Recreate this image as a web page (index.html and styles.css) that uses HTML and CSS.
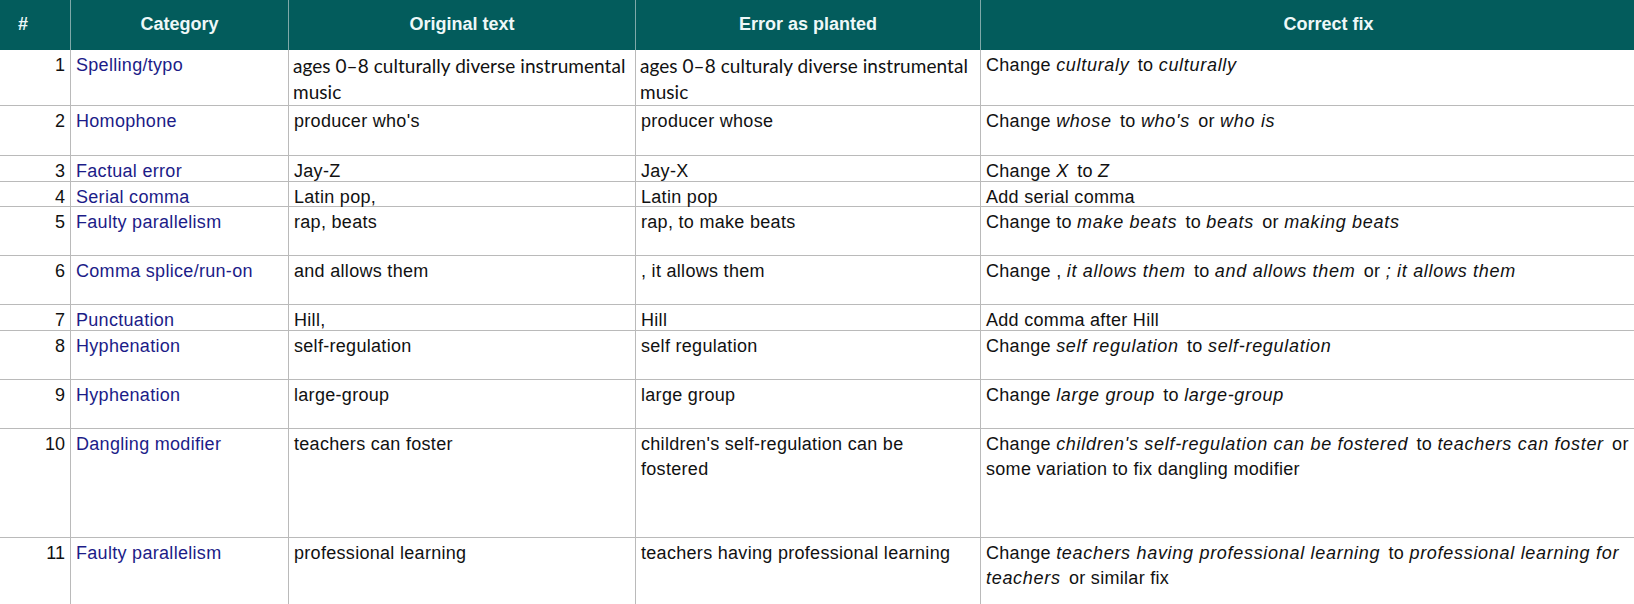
FILE: index.html
```html
<!DOCTYPE html>
<html lang="en">
<head>
<meta charset="utf-8">
<title>Planted errors</title>
<link rel="stylesheet" href="styles.css">
</head>
<body>
<div class="sheet">
  <div class="row head">
    <div class="cell hash">#</div>
    <div class="cell">Category</div>
    <div class="cell">Original text</div>
    <div class="cell">Error as planted</div>
    <div class="cell fixhead">Correct fix</div>
  </div>
  <div class="row h56">
    <div class="cell num">1</div>
    <div class="cell cat">Spelling/typo</div>
    <div class="cell calibri">ages 0–8 culturally diverse instrumental music</div>
    <div class="cell calibri">ages 0–8 culturaly diverse instrumental music</div>
    <div class="cell">Change <i>culturaly</i> to <i>culturally</i></div>
  </div>
  <div class="row h50">
    <div class="cell num">2</div>
    <div class="cell cat">Homophone</div>
    <div class="cell">producer who's</div>
    <div class="cell">producer whose</div>
    <div class="cell">Change <i>whose</i> to <i>who's</i> or <i>who is</i></div>
  </div>
  <div class="row h26">
    <div class="cell num">3</div>
    <div class="cell cat">Factual error</div>
    <div class="cell">Jay-Z</div>
    <div class="cell">Jay-X</div>
    <div class="cell">Change <i>X</i> to <i>Z</i></div>
  </div>
  <div class="row h25">
    <div class="cell num">4</div>
    <div class="cell cat">Serial comma</div>
    <div class="cell">Latin pop,</div>
    <div class="cell">Latin pop</div>
    <div class="cell">Add serial comma</div>
  </div>
  <div class="row h49">
    <div class="cell num">5</div>
    <div class="cell cat">Faulty parallelism</div>
    <div class="cell">rap, beats</div>
    <div class="cell">rap, to make beats</div>
    <div class="cell">Change to <i>make beats</i> to <i>beats</i> or <i>making beats</i></div>
  </div>
  <div class="row h49">
    <div class="cell num">6</div>
    <div class="cell cat">Comma splice/run-on</div>
    <div class="cell">and allows them</div>
    <div class="cell">, it allows them</div>
    <div class="cell">Change , <i>it allows them</i> to <i>and allows them</i> or <i>; it allows them</i></div>
  </div>
  <div class="row h26">
    <div class="cell num">7</div>
    <div class="cell cat">Punctuation</div>
    <div class="cell">Hill,</div>
    <div class="cell">Hill</div>
    <div class="cell">Add comma after Hill</div>
  </div>
  <div class="row h49">
    <div class="cell num">8</div>
    <div class="cell cat">Hyphenation</div>
    <div class="cell">self-regulation</div>
    <div class="cell">self regulation</div>
    <div class="cell">Change <i>self regulation</i> to <i>self-regulation</i></div>
  </div>
  <div class="row h49">
    <div class="cell num">9</div>
    <div class="cell cat">Hyphenation</div>
    <div class="cell">large-group</div>
    <div class="cell">large group</div>
    <div class="cell">Change <i>large group</i> to <i>large-group</i></div>
  </div>
  <div class="row h109">
    <div class="cell num">10</div>
    <div class="cell cat">Dangling modifier</div>
    <div class="cell">teachers can foster</div>
    <div class="cell">children's self-regulation can be fostered</div>
    <div class="cell">Change <i>children's self-regulation can be fostered</i> to <i>teachers can foster</i> or some variation to fix dangling modifier</div>
  </div>
  <div class="row last">
    <div class="cell num">11</div>
    <div class="cell cat">Faulty parallelism</div>
    <div class="cell">professional learning</div>
    <div class="cell">teachers having professional learning</div>
    <div class="cell">Change <i>teachers having professional learning</i> to <i>professional learning for teachers</i> or similar fix</div>
  </div>
</div>
</body>
</html>
```
FILE: styles.css
```css
html, body {
  margin: 0;
  padding: 0;
  background: #ffffff;
}

body {
  height: 604px;
  overflow: hidden;
}

.sheet {
  width: 1634px;
  font-family: "Liberation Sans", Arial, sans-serif;
  font-size: 18px;
  line-height: 25px;
  letter-spacing: 0.3px;
  color: #111111;
}

.row {
  display: grid;
  grid-template-columns: 71px 218px 347px 345px 653px;
  box-sizing: border-box;
  border-bottom: 1px solid #bababa;
}

.cell {
  box-sizing: border-box;
  padding: 3px 5px 0 5px;
  border-right: 1px solid #bababa;
  min-width: 0;
}

.cell:last-child {
  border-right: none;
  padding-right: 0;
}

.head {
  height: 50px;
  background: #035c5c;
  border-bottom: none;
}

.head .cell {
  display: flex;
  align-items: center;
  justify-content: center;
  padding: 0 4px 2px 4px;
  color: #eef8f8;
  font-weight: bold;
  letter-spacing: 0;
  border-right: 1px solid #7fa9a9;
}

.head .cell.hash {
  justify-content: flex-start;
  padding-left: 18px;
}

.head .cell.fixhead {
  padding-left: 46px;
}

.head .cell:last-child {
  border-right: none;
}

.num {
  text-align: right;
  padding-right: 5px;
  letter-spacing: 0;
}

.cat {
  color: #1c1c88;
}

.calibri {
  font-family: Lato, "Open Sans", sans-serif;
  font-size: 19px;
  line-height: 26px;
  letter-spacing: 0.05px;
  padding-left: 4px;
  padding-right: 1px;
}

.cell i {
  font-style: italic;
  letter-spacing: 0.7px;
  margin-right: 3px;
}

.h56 { height: 56px; }
.h50 { height: 50px; }
.h26 { height: 26px; }
.h25 { height: 25px; }
.h49 { height: 49px; }
.h109 { height: 109px; }
.last { height: 66px; border-bottom: none; }
```
